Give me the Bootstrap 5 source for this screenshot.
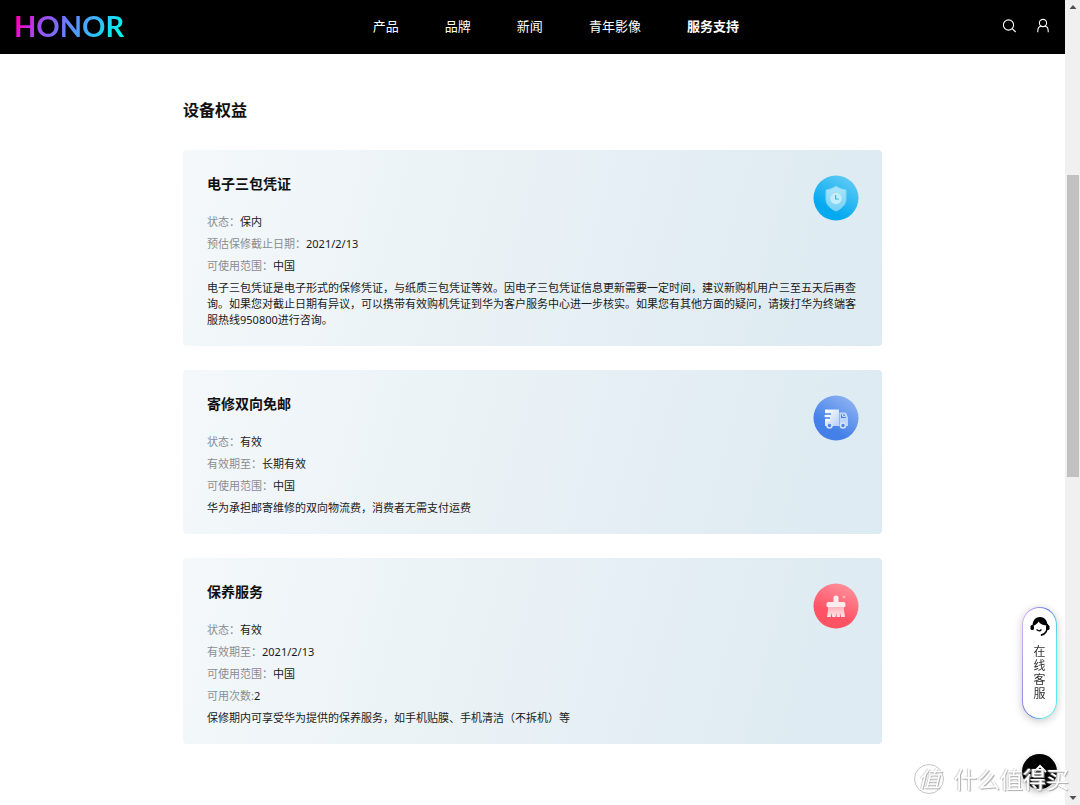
<!DOCTYPE html>
<html lang="zh-CN">
<head>
<meta charset="utf-8">
<meta name="viewport" content="width=device-width, initial-scale=1">
<title>设备权益</title>
<link href="https://cdn.jsdelivr.net/npm/bootstrap@5.3.0/dist/css/bootstrap.min.css" rel="stylesheet">
<style>
  body { font-family: "Noto Sans", "Noto Sans CJK SC", sans-serif; font-size: 11px; line-height: 16px; color: #1a1a1a; background: #fff; }
  .site-header { background: #000; height: 54px; padding: 0 15px 2px 14px; }
  .brand { font: 700 29px/32px Lato, sans-serif; color: transparent; background: linear-gradient(115deg, #ff00c8 8%, #a04bf0 26%, #6a7cff 46%, #3fb0ff 66%, #00f5ee 92%); -webkit-background-clip: text; background-clip: text; }
  .main-nav { gap: 46px; margin-left: 24%; font-size: 13px; line-height: 20px; }
  .main-nav a { color: #fff; text-decoration: none; white-space: nowrap; }
  .tool-btn { color: #fff; line-height: 0; }
  .benefits { width: 100%; max-width: 699px; padding: 44px 0 48px; }
  .page-title { font-size: 16px; line-height: 24px; font-weight: 700; color: #111; margin-bottom: 28px; }
  .benefit { border: 0; border-radius: 4px; padding: 24px 24px 18px; background: linear-gradient(105deg, #f4f8fb 0%, #e9f1f5 45%, #e4eef4 65%, #dceaf1 100%); color: inherit; }
  .benefit h2 { font-size: 14px; line-height: 20px; font-weight: 700; color: #111; margin-bottom: 17px; }
  .benefit dl { margin: 0 0 3px; }
  .benefit dl div { line-height: 22px; }
  .benefit dt { font-weight: 400; color: #8a8d90; }
  .benefit dd { margin: 0; }
  .benefit-icon { position: absolute; top: 25px; right: 23px; }
  .scroll-track { width: 15px; background: #f0f0f0; color: #505050; }
  .scroll-thumb { width: 12px; height: 37.5vh; margin-top: 20.5vh; background: #c1c1c1; }
  .chat { position: fixed; right: 23px; bottom: 86px; width: 35px; height: 112px; padding: 8px 0 0; border: 1px solid transparent; border-radius: 18px; background: linear-gradient(#fff, #fff) padding-box, linear-gradient(100deg, #e6b9ef, #5c74e0 50%, #5fe8ee 75%) border-box; box-shadow: 0 2px 8px rgba(0,0,0,.22); color: #333; font-size: 12px; line-height: 14px; }
  .chat span { width: 12px; margin-top: 8px; }
  .to-top { position: fixed; right: 23px; bottom: 16px; width: 35px; height: 35px; border: 0; border-radius: 50%; background: #000; box-shadow: 0 3px 6px rgba(0,0,0,.25); }
  .watermark { position: fixed; right: 11px; bottom: 10px; gap: 10px; color: #fff; font-size: 23px; line-height: 32px; text-shadow: 1px 1px 1px #aaa, -1px 0 1px #ccc; pointer-events: none; z-index: 5; }
  .watermark .seal { width: 30px; height: 30px; border: 1px solid #c4c4c4; border-radius: 50%; font-size: 22px; line-height: 26px; font-style: italic; text-align: center; }
</style>
</head>
<body>
<div class="d-flex min-vh-100">
  <div class="flex-grow-1 d-flex flex-column align-items-center">
    <header class="site-header d-flex align-items-center w-100">
      <a class="brand text-decoration-none" href="#">HONOR</a>
      <nav class="main-nav d-flex" aria-label="主导航">
        <a href="#">产品</a><a href="#">品牌</a><a href="#">新闻</a><a href="#">青年影像</a><a href="#" class="fw-bold" aria-current="page">服务支持</a>
      </nav>
      <div class="d-flex ms-auto gap-3">
        <button class="tool-btn btn p-0 border-0" type="button" aria-label="搜索">
          <svg width="16" height="16" viewBox="0 0 16 16" fill="none" stroke="currentColor" stroke-width="1.1"><circle cx="6.500" cy="7" r="5.1"/><path d="M10.1 10.6 13.700 14"/></svg>
        </button>
        <button class="tool-btn btn p-0 border-0" type="button" aria-label="账户">
          <svg width="16" height="16" viewBox="0 0 16 16" fill="none" stroke="currentColor" stroke-width="1.1"><circle cx="9" cy="5" r="3.6"/><path d="M3.800 14.2v-1.1C3.800 10.2 5.400 8.2 7.400 8.2M14.200 14.2v-1.1c0-2.9-1.6-4.9-3.6-4.9"/></svg>
        </button>
      </div>
    </header>

    <main class="benefits">
      <h1 class="page-title">设备权益</h1>
      <div class="d-flex flex-column gap-4">
        <section class="card benefit">
          <svg class="benefit-icon" width="46" height="46" viewBox="0 0 46 46" aria-hidden="true">
            <defs>
              <linearGradient id="sky" x1=".85" y1=".05" x2=".4" y2=".8"><stop stop-color="#62ccf4"/><stop offset="1" stop-color="#04a9f0"/></linearGradient>
              <linearGradient id="shield" x1="0" y1="0" x2="0" y2="1"><stop stop-color="#aee6fb"/><stop offset="1" stop-color="#74d1f7"/></linearGradient>
            </defs>
            <circle cx="23" cy="23" r="22.5" fill="url(#sky)"/>
            <path d="M23 11.2C26 13 29.500 14.500 33 15v9c0 5.500-4 9.300-10 12-6-2.700-10-6.500-10-12v-9c3.500-.5 7-2 10-3.800z" fill="url(#shield)" stroke="#7fd7f9"/>
            <circle cx="23" cy="23.500" r="5.700" fill="#c4eefd"/>
            <path d="M22.600 20v4h3.200" fill="none" stroke="#35b7ef" stroke-width="1.200"/>
          </svg>
          <h2>电子三包凭证</h2>
          <dl>
            <div class="d-flex"><dt>状态&#xFF1A;</dt><dd>保内</dd></div>
            <div class="d-flex"><dt>预估保修截止日期&#xFF1A;</dt><dd>2021/2/13</dd></div>
            <div class="d-flex"><dt>可使用范围&#xFF1A;</dt><dd>中国</dd></div>
          </dl>
          <p class="mb-0">电子三包凭证是电子形式的保修凭证&#xFF0C;与纸质三包凭证等效。因电子三包凭证信息更新需要一定时间&#xFF0C;建议新购机用户三至五天后再查询。如果您对截止日期有异议&#xFF0C;可以携带有效购机凭证到华为客户服务中心进一步核实。如果您有其他方面的疑问&#xFF0C;请拨打华为终端客服热线950800进行咨询。</p>
        </section>

        <section class="card benefit">
          <svg class="benefit-icon" width="46" height="46" viewBox="0 0 46 46" aria-hidden="true">
            <defs>
              <linearGradient id="blue" x1=".85" y1=".05" x2=".4" y2=".75"><stop stop-color="#8fb3f2"/><stop offset="1" stop-color="#4480e8"/></linearGradient>
              <linearGradient id="van" x1="0" y1="0" x2="1" y2="1"><stop stop-color="#fff"/><stop offset="1" stop-color="#b9d0fa"/></linearGradient>
            </defs>
            <circle cx="23" cy="23" r="22.500" fill="url(#blue)"/>
            <path d="M12 14.500h14v16.500H12z" fill="url(#van)"/>
            <path d="M26.500 17.500h5.500q1 0 1.500 1l1.500 4v8.500h-8.500z" fill="#c0d4fa"/>
            <path d="M28 19.500h3.500l1.500 3.500h-5z" fill="#467fe7"/><path d="M29.500 19.500v1.800h3" fill="none" stroke="#e5eeff"/>
            <path d="M11 19h7M11 23h6" stroke="#4c84e9" stroke-width="1.600"/><path d="M11.500 21h6M12 25h5" stroke="#fff" stroke-width="1.600"/>
            <circle cx="16.500" cy="30.500" r="2.500" fill="#4c84e9" stroke="#d5e2fd" stroke-width="1.600"/>
            <circle cx="30" cy="30.500" r="2.500" fill="#4c84e9" stroke="#d5e2fd" stroke-width="1.600"/>
          </svg>
          <h2>寄修双向免邮</h2>
          <dl>
            <div class="d-flex"><dt>状态&#xFF1A;</dt><dd>有效</dd></div>
            <div class="d-flex"><dt>有效期至&#xFF1A;</dt><dd>长期有效</dd></div>
            <div class="d-flex"><dt>可使用范围&#xFF1A;</dt><dd>中国</dd></div>
          </dl>
          <p class="mb-0">华为承担邮寄维修的双向物流费&#xFF0C;消费者无需支付运费</p>
        </section>

        <section class="card benefit">
          <svg class="benefit-icon" width="46" height="46" viewBox="0 0 46 46" aria-hidden="true">
            <defs>
              <linearGradient id="red" x1=".75" y1="0" x2=".45" y2=".7"><stop stop-color="#ff929d"/><stop offset="1" stop-color="#fe5265"/></linearGradient>
              <linearGradient id="brush" x1="0" y1="0" x2="0" y2="1"><stop stop-color="#ffb3ba"/><stop offset="1" stop-color="#ffe6e8"/></linearGradient>
            </defs>
            <circle cx="23" cy="23" r="22.500" fill="url(#red)"/>
            <path d="M20.500 19v-5q0-1.500 2.500-1.500t2.500 1.500v5h5q2 0 2 2v2q0 1-1 1h-17q-1 0-1-1v-2q0-2 2-2z" fill="#ffecee"/>
            <path d="M15 24h16v3l1 7h-4l-.6-4-.6 4h-3l-.6-4-.6 4h-3.400l-.6-4-.8 4H14l1-7z" fill="url(#brush)"/>
            <path d="m31 12 .6 1.400L33 14l-1.400.6L31 16l-.6-1.400L29 14l1.400-.6z" fill="#ffc5cb"/>
          </svg>
          <h2>保养服务</h2>
          <dl>
            <div class="d-flex"><dt>状态&#xFF1A;</dt><dd>有效</dd></div>
            <div class="d-flex"><dt>有效期至&#xFF1A;</dt><dd>2021/2/13</dd></div>
            <div class="d-flex"><dt>可使用范围&#xFF1A;</dt><dd>中国</dd></div>
            <div class="d-flex"><dt>可用次数:</dt><dd>2</dd></div>
          </dl>
          <p class="mb-0">保修期内可享受华为提供的保养服务&#xFF0C;如手机贴膜、手机清洁&#xFF08;不拆机&#xFF09;等</p>
        </section>
      </div>
    </main>
  </div>

  <div class="scroll-track flex-shrink-0 d-flex flex-column align-items-center justify-content-between py-1" aria-hidden="true">
    <svg width="8" height="6" viewBox="0 0 8 6"><path d="M4 1 7.500 5h-7z" fill="currentColor"/></svg>
    <div class="scroll-thumb mb-auto"></div>
    <svg width="8" height="6" viewBox="0 0 8 6"><path d="M4 5 .5 1h7z" fill="currentColor"/></svg>
  </div>
</div>

<button class="chat d-flex flex-column align-items-center" type="button">
  <svg width="20" height="21" viewBox="0 0 20 21" aria-hidden="true">
    <path d="M2.500 10C2.500 4 6 1 10 1s7.500 3 7.500 8.500c-4 0-7.500-1.500-9-4C7.500 7.500 5.500 9 4 9.500z" fill="#000"/>
    <path d="M17.300 8c.8 6.500-2 10.500-6.500 11.300" fill="none" stroke="#000" stroke-width="1.600"/>
    <rect x="0.500" y="9" width="3.500" height="5" rx="1.500"/><rect x="16" y="9" width="3.500" height="5" rx="1.500"/>
    <path d="M6.500 13.500q2.800 2.600 5 0" fill="none" stroke="#000" stroke-width="1.200"/>
  </svg>
  <span>在线客服</span>
</button>
<button class="to-top p-0" type="button" aria-label="返回顶部">
  <svg width="18" height="18" viewBox="0 0 18 18" fill="none" stroke="#fff" stroke-width="2" aria-hidden="true"><path d="m3 9 6-6 6 6"/></svg>
</button>
<div class="watermark d-flex align-items-center"><span class="seal">值</span><span>什么值得买</span></div>
<script src="https://cdn.jsdelivr.net/npm/bootstrap@5.3.0/dist/js/bootstrap.bundle.min.js"></script>
</body>
</html>
